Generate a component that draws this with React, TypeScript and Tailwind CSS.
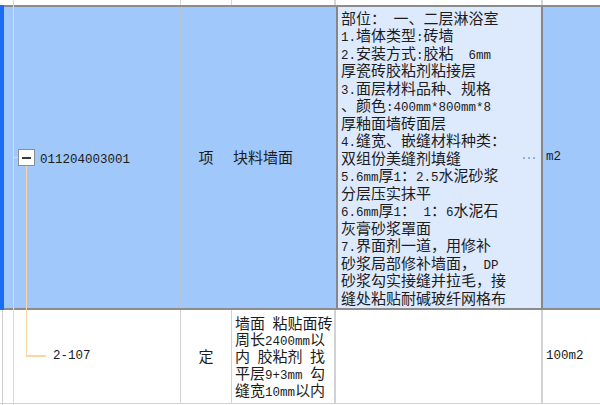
import React from "react"

const descLines = [
  "部位： 一、二层淋浴室",
  "1.墙体类型:砖墙",
  "2.安装方式:胶粘  6mm",
  "厚瓷砖胶粘剂粘接层",
  "3.面层材料品种、规格",
  "、颜色:400mm*800mm*8",
  "厚釉面墙砖面层",
  "4.缝宽、嵌缝材料种类：",
  "双组份美缝剂填缝",
  "5.6mm厚1：2.5水泥砂浆",
  "分层压实抹平",
  "6.6mm厚1： 1：6水泥石",
  "灰膏砂浆罩面",
  "7.界面剂一道，用修补",
  "砂浆局部修补墙面， DP",
  "砂浆勾实接缝并拉毛，接",
  "缝处粘贴耐碱玻纤网格布",
]

const quotaLines = ["墙面 粘贴面砖", "周长2400mm以", "内 胶粘剂 找", "平层9+3mm 勾", "缝宽10mm以内"]

// ascii runs get the narrow mono face, like the half-width glyphs in the grid
function Txt({ s }: { s: string }) {
  const parts = s.split(/([\x00-\x7f]+)/)
  return (
    <>
      {parts.map((p, i) =>
        /^[\x00-\x7f]+$/.test(p) ? (
          <span key={i} className="font-['Liberation_Mono',monospace] text-[12.5px]">
            {p}
          </span>
        ) : (
          <React.Fragment key={i}>{p}</React.Fragment>
        )
      )}
    </>
  )
}

export default function App() {
  return (
    <div className="relative w-[600px] h-[405px] overflow-hidden bg-white text-[15px] text-[#1c1c1c] font-['Noto_Sans_CJK_SC',sans-serif]">
      {/* header strip */}
      <div className="grid grid-cols-[181px_51px_104px_207px_57px] h-[5px]">
        <div className="border-r border-[#d6d6d6]" />
        <div className="border-r border-[#d6d6d6]" />
        <div className="border-r-2 border-[#d6d6d6]" />
        <div className="border-r-2 border-[#d6d6d6]" />
        <div />
      </div>

      {/* selected row */}
      <div className="grid grid-cols-[181px_51px_104px_207px_57px] h-[305px] border-y-2 border-[#8c8c8c] bg-[#a0c8fa]">
        <div className="flex items-center pl-[18px] border-r border-[#b9c4d2]">
          <div className="flex items-center justify-center w-[17px] h-[17px] bg-white border border-[#8f8f8f]">
            <div className="w-[9px] h-[2px] bg-[#3a3a3a]" />
          </div>
          <span className="ml-[5px]">
            <Txt s="011204003001" />
          </span>
        </div>
        <div className="flex items-center justify-center border-r border-[#b9c4d2]">项</div>
        <div className="flex items-center pl-[1px]">块料墙面</div>
        <div className="flex items-center bg-[#dde9fc] border-x-2 border-[#878787] pl-[3px] pr-[6px]">
          <div className="flex-1 flex flex-col">
            {descLines.map((l, i) => (
              <div key={i} className="h-[17.5px] leading-[17.5px] whitespace-pre">
                <Txt s={l} />
              </div>
            ))}
          </div>
          <div className="flex gap-[3px] mt-[1px]">
            <span className="w-[2px] h-[2px] bg-[#8db2e2]" />
            <span className="w-[2px] h-[2px] bg-[#8db2e2]" />
            <span className="w-[2px] h-[2px] bg-[#8db2e2]" />
          </div>
        </div>
        <div className="flex items-center pl-[3px]">
          <Txt s="m2" />
        </div>
      </div>

      {/* quota row */}
      <div className="grid grid-cols-[181px_51px_104px_207px_57px] h-[94px] border-b border-[#d2d2d2]">
        <div className="flex items-center pl-[53px] border-r border-[#d2d2d2]">
          <Txt s="2-107" />
        </div>
        <div className="flex items-center justify-center border-r border-[#d2d2d2]">定</div>
        <div className="flex flex-col justify-center pl-[3px] border-r-2 border-[#d2d2d2]">
          {quotaLines.map((l, i) => (
            <div key={i} className="h-[16.7px] leading-[16.7px] whitespace-pre">
              <Txt s={l} />
            </div>
          ))}
        </div>
        <div className="border-r-2 border-[#d2d2d2]" />
        <div className="flex items-center pl-[3px]">
          <Txt s="100m2" />
        </div>
      </div>

      {/* tree connectors and row marker */}
      <div className="absolute left-[13px] top-0 w-[1px] h-[405px] bg-[#fbd6a4]" />
      <div className="absolute left-[13px] top-[157px] w-[5px] h-[1px] bg-[#fbd6a4]" />
      <div className="absolute left-[26px] top-[166px] w-[1px] h-[190px] bg-[#fbd6a4]" />
      <div className="absolute left-[26px] top-[355px] w-[20px] h-[2px] bg-[#fbd6a4]" />
      <div className="absolute left-0 top-[5px] w-[4px] h-[305px] bg-[#1a6cf0]" />
      <div className="absolute left-[2px] top-[310px] w-[1px] h-[95px] bg-[#cfcfcf]" />
    </div>
  )
}
